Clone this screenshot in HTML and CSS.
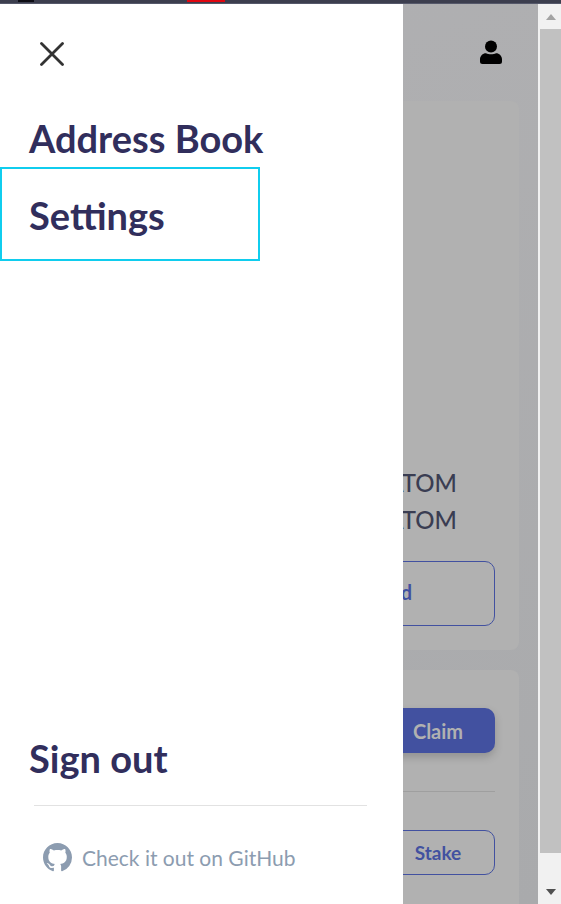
FILE: index.html
```html
<!DOCTYPE html>
<html lang="en">
<head>
  <meta charset="UTF-8">
  <title>Wallet</title>
  <link rel="stylesheet" href="styles.css">
</head>
<body>
  <!-- bit of the browser tabs left at the top -->
  <div class="top-strip">
    <span class="strip-dark"></span>
    <span class="strip-red"></span>
  </div>

  <div class="window">
    <div class="page">
      <header class="page-header">
        <svg class="user-icon" viewBox="0 0 22 24" width="22" height="24">
          <circle cx="11" cy="6.500" r="6"/>
          <path d="M6 13.200c1.400.7 3 1.100 5 1.100s3.600-.4 5-1.100c3.300 0 6 2.700 6 6V21.500a2.500 2.500 0 0 1-2.500 2.500H2.500A2.500 2.500 0 0 1 0 21.500V19.200c0-3.300 2.700-6 6-6z"/>
        </svg>
      </header>
      <section class="card card-balance">
        <div class="balance-row">0 ATOM</div>
        <div class="balance-row">0 ATOM</div>
        <button class="btn btn-outline btn-send">Send</button>
      </section>
      <section class="card card-rewards">
        <button class="btn btn-solid">Claim</button>
        <hr class="card-line">
        <button class="btn btn-outline btn-stake">Stake</button>
      </section>
    </div>

    <div class="scrollbar">
      <div class="scroll-btn"><span class="arrow-up"></span></div>
      <div class="scroll-thumb"></div>
      <div class="scroll-btn scroll-btn-down"><span class="arrow-down"></span></div>
    </div>

    <!-- side menu, sits on top of the page -->
    <aside class="drawer">
      <button class="close-btn" aria-label="Close">
        <svg viewBox="0 0 24 24" width="24" height="24">
          <path d="M1.500 1.500L22.500 22.500M22.500 1.500L1.500 22.500"/>
        </svg>
      </button>
      <nav class="drawer-nav">
        <a class="drawer-link" href="#">Address Book</a>
        <a class="drawer-link drawer-link-focus" href="#">Settings</a>
      </nav>
      <div class="drawer-bottom">
        <a class="drawer-link" href="#">Sign out</a>
        <hr class="drawer-line">
        <a class="github-link" href="#">
          <svg viewBox="0 0 16 16" width="29" height="29">
            <path d="M8 0C3.580 0 0 3.580 0 8c0 3.540 2.290 6.530 5.470 7.590.4.070.55-.17.55-.38 0-.19-.01-.82-.01-1.490-2.010.37-2.530-.49-2.690-.94-.09-.23-.48-.94-.82-1.130-.28-.15-.68-.52-.01-.53.63-.01 1.080.58 1.230.82.720 1.210 1.870.87 2.330.66.070-.52.280-.87.510-1.070-1.780-.2-3.640-.89-3.640-3.950 0-.87.310-1.590.820-2.150-.08-.2-.36-1.020.08-2.120 0 0 .67-.21 2.200.82.640-.18 1.320-.27 2-.27s1.360.09 2 .27c1.530-1.040 2.200-.82 2.200-.82.440 1.100.160 1.920.080 2.120.510.560.820 1.270.820 2.150 0 3.070-1.870 3.750-3.650 3.950.290.250.540.730.540 1.480 0 1.070-.01 1.930-.01 2.200 0 .21.150.460.550.380A8.010 8.010 0 0 0 16 8c0-4.420-3.580-8-8-8z"/>
          </svg>
          <span>Check it out on GitHub</span>
        </a>
      </div>
    </aside>
  </div>
</body>
</html>
```

FILE: styles.css
```css
html, body {
  height: 100%;
}

body {
  margin: 0;
  display: flex;
  flex-direction: column;
  overflow: hidden;
  font-family: "Lato", "Noto Sans", sans-serif;
  background: #fff;
}

.top-strip {
  height: 4px;
  flex: none;
  display: flex;
  align-items: flex-start;
  background: #3c3e4e;
  border-bottom: 1px solid #55586a;
  box-sizing: border-box;
}

.strip-dark {
  width: 16px;
  height: 2px;
  margin-left: 18px;
  background: #0c0c14;
}

.strip-red {
  width: 38px;
  height: 2px;
  margin-left: 153px;
  background: #e00610;
}

.window {
  position: relative;
  flex: 1;
  min-height: 0;
  display: flex;
}

.page {
  flex: 1;
  min-width: 0;
  overflow: hidden;
  padding: 0 19px 0 20px;
  background: linear-gradient(160deg, #b0b0b2, #a9aaac);
}

.page-header {
  height: 97px;
  display: flex;
  justify-content: flex-end;
  align-items: flex-start;
  padding: 36px 17px 0 0;
  box-sizing: border-box;
}

.user-icon {
  fill: #000;
}

.card {
  background: #b1b1b1;
  border-radius: 8px;
  padding: 0 24px;
  display: flex;
  flex-direction: column;
  align-items: flex-end;
}

.card-balance {
  height: 549px;
  box-sizing: border-box;
  justify-content: flex-end;
  padding-bottom: 24px;
  margin-bottom: 20px;
}

.balance-row {
  padding-right: 38px;
  font-size: 24px;
  font-weight: 500;
  line-height: 37px;
  color: #3a3d52;
}

.card-rewards {
  padding-top: 38px;
  padding-bottom: 40px;
}

.btn {
  font-family: "Lato", "Noto Sans", sans-serif;
  font-size: 20px;
  font-weight: 700;
  border-radius: 10px;
  box-sizing: border-box;
  width: 114px;
  height: 45px;
  padding: 0;
}

.btn-outline {
  background: transparent;
  color: #4251a0;
  border: 1px solid #4251a0;
}

.btn-send {
  width: 210px;
  height: 65px;
  margin-top: 23px;
  padding-bottom: 3px;
}

.btn-stake {
  font-size: 19px;
}

.btn-solid {
  background: #4251a0;
  color: #b1b1b1;
  border: none;
  box-shadow: 0 4px 8px rgba(0, 0, 0, 0.18);
}

.card-line {
  width: 100%;
  height: 1px;
  margin: 38px 0;
  border: none;
  background: #9f9f9f;
}

.scrollbar {
  width: 23px;
  flex: none;
  display: flex;
  flex-direction: column;
  background: #f1f1f1;
}

.scroll-btn {
  height: 25px;
  display: flex;
  align-items: center;
  justify-content: center;
  padding-left: 2px;
}

.scroll-btn-down {
  height: 51px;
  align-items: flex-end;
  padding-bottom: 9px;
  box-sizing: border-box;
}

.scroll-thumb {
  flex: 1;
  margin-left: 2px;
  background: #c1c1c1;
}

.arrow-up {
  border: 5.500px solid transparent;
  border-top: none;
  border-bottom: 6px solid #a3a3a3;
}

.arrow-down {
  border: 5.500px solid transparent;
  border-bottom: none;
  border-top: 6px solid #505050;
}

.drawer {
  position: absolute;
  top: 0;
  bottom: 0;
  left: 0;
  width: 403px;
  box-sizing: border-box;
  display: flex;
  flex-direction: column;
  background: #fff;
}

.close-btn {
  align-self: flex-start;
  margin: 38px 0 0 40px;
  padding: 0;
  height: 24px;
  border: none;
  background: none;
}

.close-btn svg {
  display: block;
  fill: none;
  stroke: #333;
  stroke-width: 2.800;
  stroke-linecap: round;
}

.drawer-nav {
  margin-top: 43px;
  display: flex;
  flex-direction: column;
}

.drawer-link {
  display: block;
  padding-left: 29px;
  font-size: 38px;
  font-weight: 700;
  line-height: 58px;
  color: #312e5c;
  text-decoration: none;
}

.drawer-link-focus {
  width: 260px;
  height: 94px;
  box-sizing: border-box;
  padding-left: 27px;
  line-height: 92px;
  border: 2px solid #10cdee;
}

.drawer-bottom {
  margin-top: auto;
  display: flex;
  flex-direction: column;
}

.drawer-line {
  width: 333px;
  height: 1px;
  margin: 18px 0 0 34px;
  border: none;
  background: #e2e2e2;
}

.github-link {
  display: flex;
  align-items: center;
  gap: 10px;
  margin: 37px 0 32px 43px;
  font-size: 21px;
  color: #8c9cb0;
  text-decoration: none;
}

.github-link svg {
  fill: #8c9cb0;
}
```
